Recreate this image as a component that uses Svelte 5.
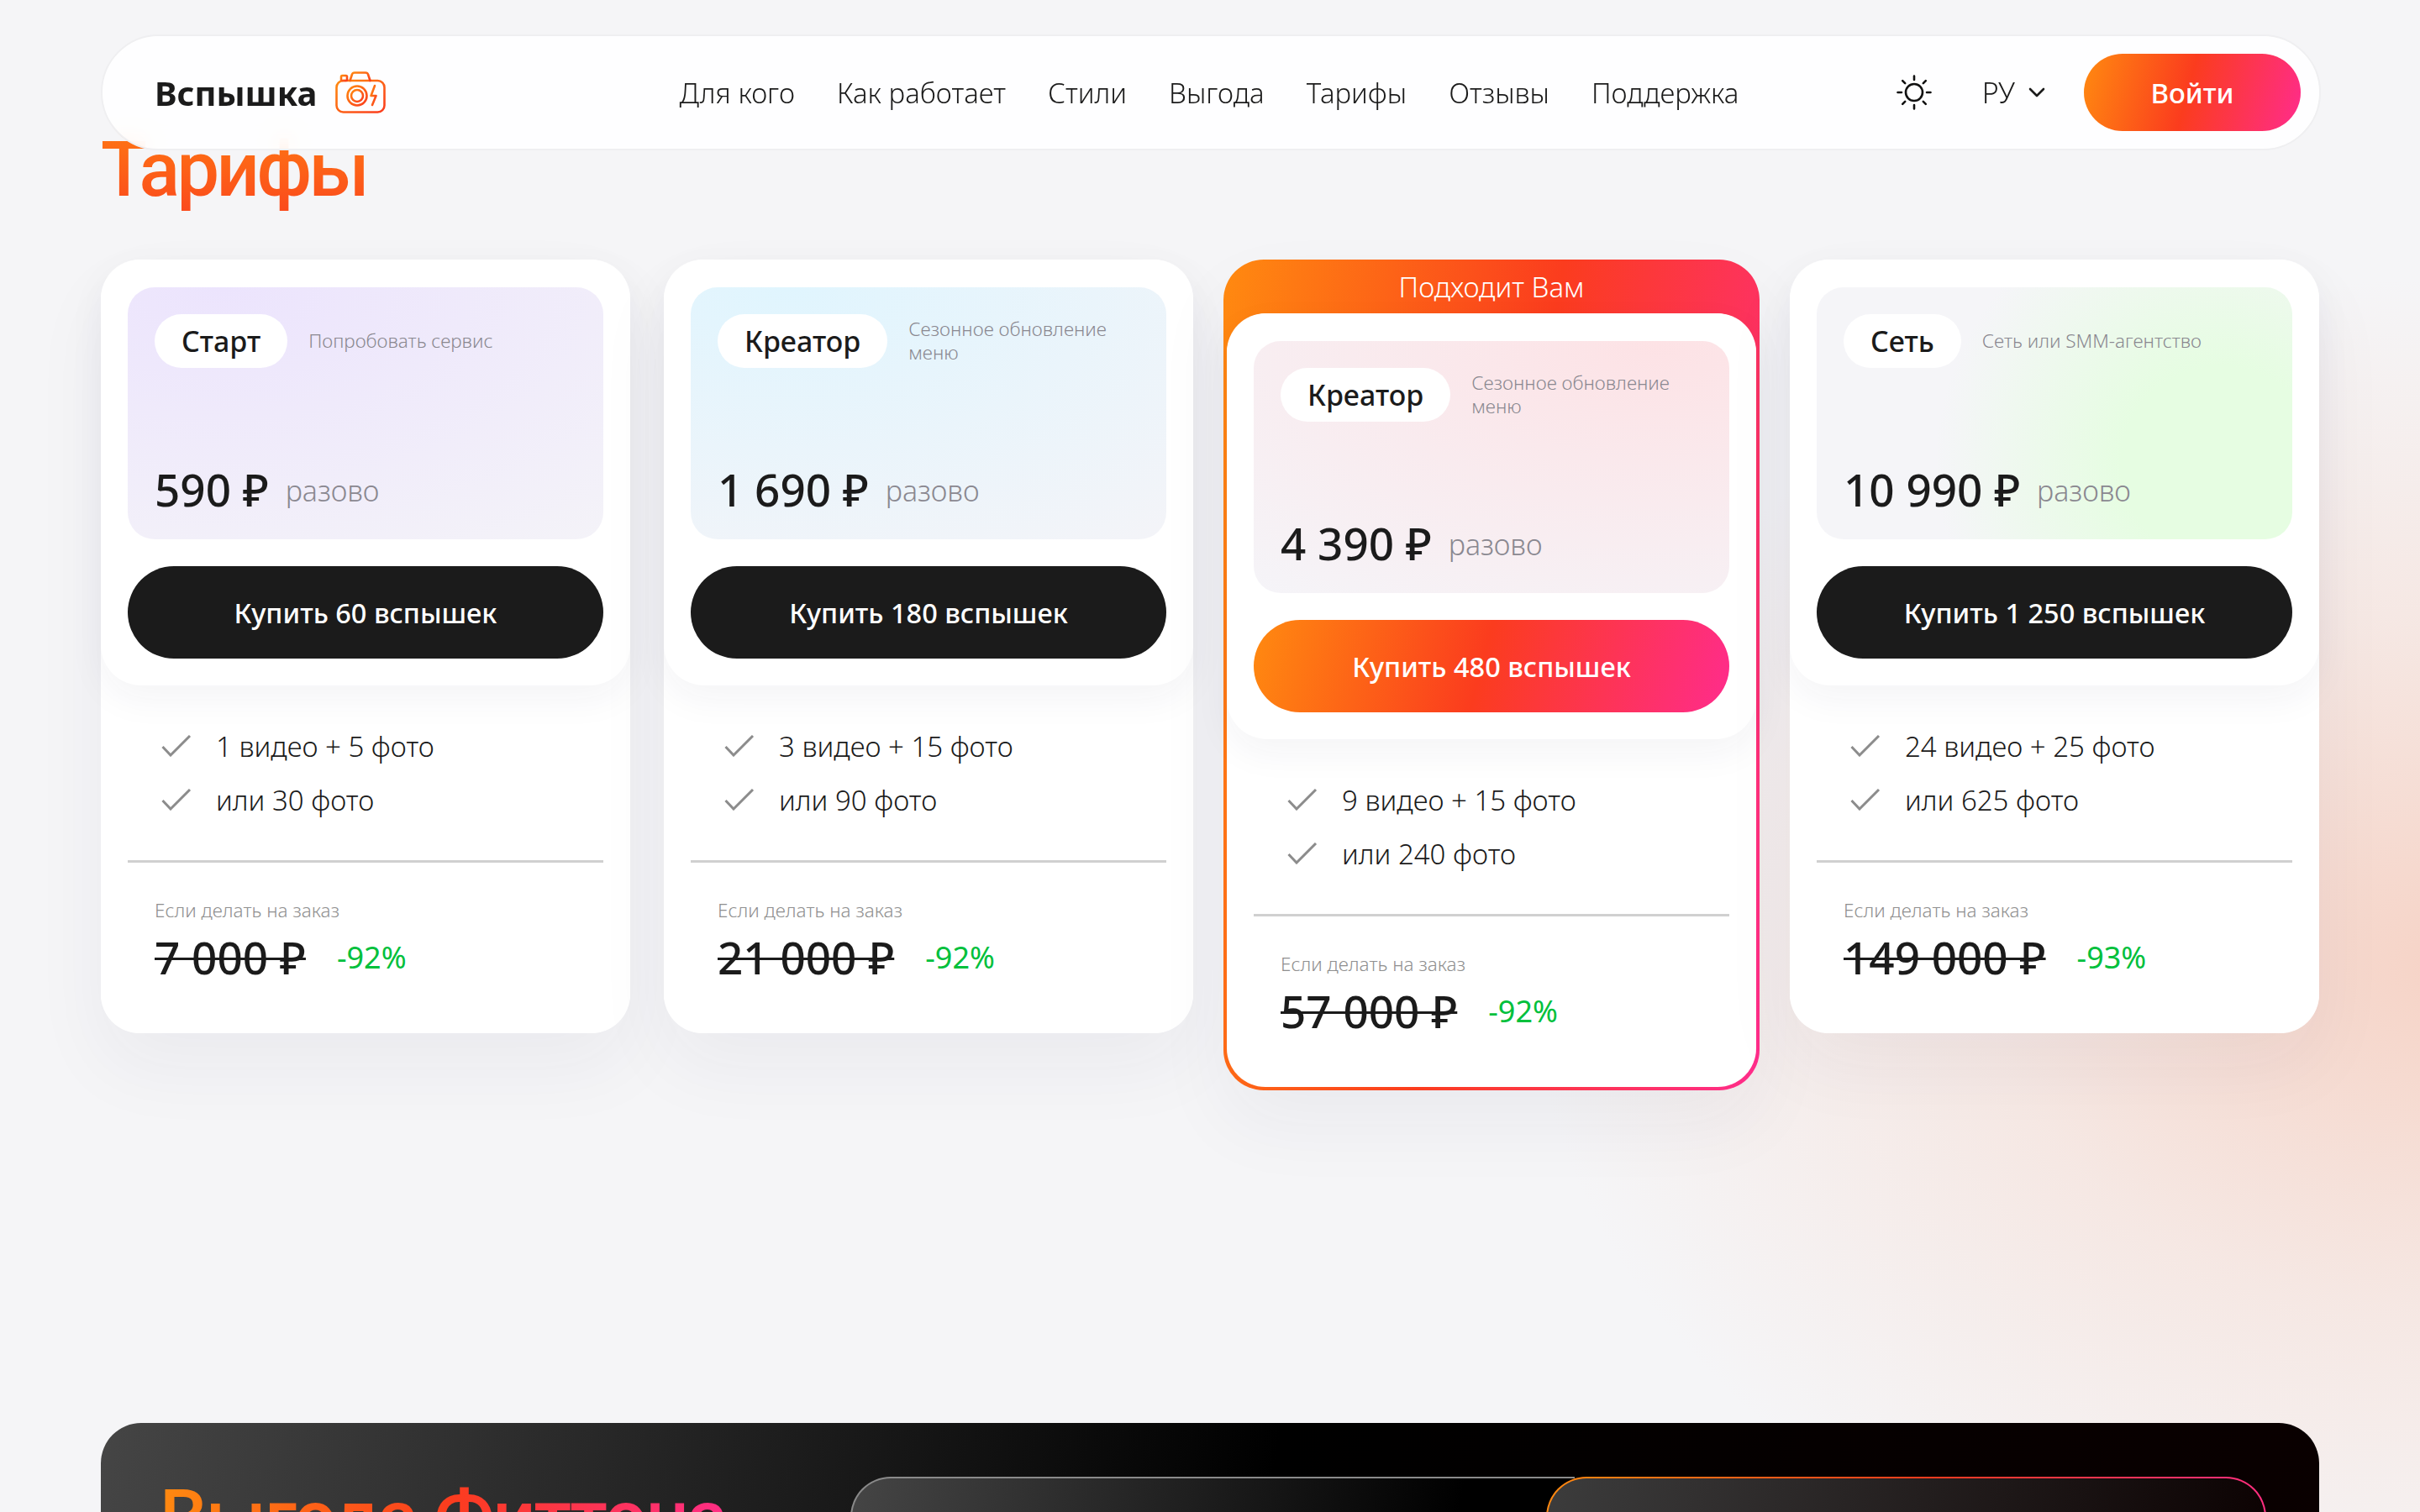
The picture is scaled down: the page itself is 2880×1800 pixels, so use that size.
<script>
  const gain = [
    { name: 'Старт', note: 'Попробовать сервис', price: '590 ₽', buy: 'Купить 60 вспышек', items: ['1 видео + 5 фото', 'или 30 фото'], old: '7 000 ₽', off: '-92%', tone: 'violet' },
    { name: 'Креатор', note: 'Сезонное обновление меню', price: '1 690 ₽', buy: 'Купить 180 вспышек', items: ['3 видео + 15 фото', 'или 90 фото'], old: '21 000 ₽', off: '-92%', tone: 'blue' },
    { name: 'Креатор', note: 'Сезонное обновление меню', price: '4 390 ₽', buy: 'Купить 480 вспышек', items: ['9 видео + 15 фото', 'или 240 фото'], old: '57 000 ₽', off: '-92%', tone: 'rose', featured: true },
    { name: 'Сеть', note: 'Сеть или SMM-агентство', price: '10 990 ₽', buy: 'Купить 1 250 вспышек', items: ['24 видео + 25 фото', 'или 625 фото'], old: '149 000 ₽', off: '-93%', tone: 'green' }
  ];
  const nav = ['Для кого', 'Как работает', 'Стили', 'Выгода', 'Тарифы', 'Отзывы', 'Поддержка'];
</script>

<div class="page">
  <header class="top">
    <a class="logo" href="#top">
      <span>Вспышка</span>
      <svg width="60" height="50" viewBox="0 0 60 50" fill="none" stroke="url(#cam)" stroke-width="2.6" stroke-linejoin="round" stroke-linecap="round">
        <defs>
          <linearGradient id="cam" x1="0" y1="0" x2="1" y2="1">
            <stop offset="0" stop-color="#ff8a10" />
            <stop offset="1" stop-color="#fb3c1e" />
          </linearGradient>
        </defs>
        <rect x="1.5" y="11" width="57" height="37.5" rx="8" />
        <path d="M17.5 11 20 3.5Q20.6 1.5 23 1.5H36Q38.4 1.5 39 3.5L41.5 11" />
        <rect x="7" y="5" width="7" height="6" rx="1.2" />
        <circle cx="26" cy="29" r="11.5" />
        <circle cx="26" cy="29" r="7" />
        <path d="M47 17 42.5 29H48.5L44 40" />
      </svg>
    </a>
    <nav>
      {#each nav as item}
        <a href="#top">{item}</a>
      {/each}
    </nav>
    <div class="tools">
      <svg class="sun" width="42" height="42" viewBox="0 0 42 42" fill="none" stroke="#111" stroke-width="2.6" stroke-linecap="round">
        <circle cx="21" cy="21" r="10" />
        <path d="M21 1.5V6M21 36V40.5M1.5 21H6M36 21H40.5M7.2 7.2 10.2 10.2M31.8 31.8 34.8 34.8M7.2 34.8 10.2 31.8M31.8 10.2 34.8 7.2" />
      </svg>
      <button class="lang" type="button">
        РУ
        <svg width="20" height="12" viewBox="0 0 20 12" fill="none" stroke="#1b1b1b" stroke-width="2.6" stroke-linecap="round" stroke-linejoin="round"><path d="M2 2 10 10 18 2" /></svg>
      </button>
      <button class="login" type="button">Войти</button>
    </div>
  </header>

  <main>
    <h1>Тарифы</h1>
    <section class="plans">
      {#each gain as plan}
        <article class="plan" class:featured={plan.featured}>
          {#if plan.featured}
            <div class="ribbon">Подходит Вам</div>
          {/if}
          <div class="body">
            <div class="head">
              <div class="panel {plan.tone}">
                <div class="panel-top">
                  <span class="pill">{plan.name}</span>
                  <span class="note">{plan.note}</span>
                </div>
                <p class="price">{plan.price} <small>разово</small></p>
              </div>
              <button class="buy" type="button">{plan.buy}</button>
            </div>
            <ul>
              {#each plan.items as item}
                <li>
                  <svg width="36" height="26" viewBox="0 0 36 26" fill="none" stroke="#8c8c8c" stroke-width="3"><path d="M1.5 14 11 24 34 1" /></svg>
                  {item}
                </li>
              {/each}
            </ul>
            <div class="custom">
              <p>Если делать на заказ</p>
              <div class="old-row">
                <s>{plan.old}</s>
                <span>{plan.off}</span>
              </div>
            </div>
          </div>
        </article>
      {/each}
    </section>

    <section class="dark">
      <h2>Выгода Фиттона</h2>
      <div class="compare">
        <div class="cmp plain"></div>
        <div class="cmp hot"></div>
      </div>
    </section>
  </main>
</div>

<style>
  :global(body) {
    margin: 0;
    background: #f5f5f7;
  }

  .page {
    position: relative;
    height: 1800px;
    overflow: hidden;
    font-family: "Noto Sans", "Open Sans", sans-serif;
    color: #1b1b1b;
    background:
      radial-gradient(1100px 820px at 2920px 1150px, #f6d3c6 0%, rgba(246, 213, 200, 0.42) 50%, rgba(246, 213, 200, 0) 100%),
      #f5f5f7;
  }

  .top {
    position: absolute;
    top: 41px;
    left: 120px;
    z-index: 5;
    box-sizing: border-box;
    width: 2642px;
    height: 138px;
    display: flex;
    align-items: center;
    padding: 0 22px 0 62px;
    border: 2px solid #efeff1;
    border-radius: 69px;
    background: rgba(255, 255, 255, 0.9);
    backdrop-filter: blur(12px);
  }

  .logo {
    display: flex;
    align-items: center;
    gap: 22px;
    color: #1b1b1b;
    text-decoration: none;
    font-size: 40px;
    font-weight: 700;
  }

  nav {
    display: flex;
    gap: 50px;
    margin-left: 349px;
  }

  nav a {
    color: #1b1b1b;
    text-decoration: none;
    font-size: 33px;
    font-weight: 300;
  }

  .tools {
    display: flex;
    align-items: center;
    margin-left: auto;
  }

  .lang {
    display: flex;
    align-items: center;
    gap: 16px;
    margin: 0 46px 0 60px;
    padding: 0;
    border: 0;
    background: none;
    color: #1b1b1b;
    font: 300 34px "Noto Sans", sans-serif;
  }

  .login {
    width: 258px;
    height: 92px;
    border: 0;
    border-radius: 46px;
    background: linear-gradient(105deg, #ff8a10 0%, #fb3c1e 48%, #ff2c8c 100%);
    color: #fff;
    font: 500 33px "Noto Sans", sans-serif;
  }

  main {
    padding: 0 120px;
  }

  h1 {
    box-sizing: border-box;
    margin: 0;
    padding-top: 153px;
    height: 309px;
    font-family: Roboto, sans-serif;
    font-size: 90px;
    line-height: 100px;
    font-weight: 500;
    letter-spacing: -3.5px;
    background: linear-gradient(180deg, #ff7d12 45%, #fb4c1c 80%);
    background-clip: text;
    -webkit-background-clip: text;
    color: transparent;
    width: max-content;
  }

  .plans {
    display: grid;
    grid-template-columns: repeat(4, 630px);
    gap: 40px;
    align-items: start;
  }

  .plan {
    border-radius: 48px;
    background: #fff;
    box-shadow: 0 40px 90px rgba(40, 40, 70, 0.05);
  }

  .featured {
    margin: 0 -4px;
    padding: 0 4px 4px;
    background: linear-gradient(100deg, #ff8a10 0%, #fb3c1e 50%, #ff2c8c 100%);
  }

  .ribbon {
    height: 64px;
    display: flex;
    align-items: center;
    justify-content: center;
    color: #fff;
    font-size: 33px;
    font-weight: 300;
  }

  .body {
    border-radius: 46px;
    background: #fff;
  }

  .head {
    box-sizing: border-box;
    height: 507px;
    padding: 33px 32px 32px;
    border-radius: 48px;
    background: #fff;
    box-shadow: 0 16px 44px rgba(40, 40, 70, 0.05);
  }

  .panel {
    box-sizing: border-box;
    height: 300px;
    display: flex;
    flex-direction: column;
    justify-content: space-between;
    padding: 32px 32px 28px;
    border-radius: 32px;
  }

  .violet { background: radial-gradient(130% 130% at 20% 0%, #ece4fd 0%, #f4f3f8 100%); }
  .blue { background: radial-gradient(130% 130% at 20% 0%, #e0f5fe 0%, #f4f4f8 100%); }
  .rose { background: radial-gradient(130% 130% at 85% 0%, #fde2e5 0%, #f5f4f8 100%); }
  .green { background: radial-gradient(60% 110% at 85% 70%, #e6fde2 35%, #f5f5f8 100%); }

  .panel-top {
    display: flex;
    align-items: flex-start;
    gap: 25px;
  }

  .pill {
    flex: none;
    height: 64px;
    padding: 0 32px;
    display: flex;
    align-items: center;
    border-radius: 32px;
    background: #fff;
    font-size: 34px;
    font-weight: 500;
  }

  .note {
    padding-top: 2px;
    min-height: 60px;
    display: flex;
    align-items: center;
    max-width: 280px;
    color: #8a8890;
    font-size: 22.5px;
    line-height: 28px;
    font-weight: 300;
  }

  .price {
    margin: 0;
    font-size: 53px;
    line-height: 60px;
    font-weight: 500;
  }

  .price small {
    margin-left: 6px;
    color: #8a8890;
    font-size: 34px;
    font-weight: 300;
    vertical-align: 6px;
  }

  .buy {
    width: 100%;
    height: 110px;
    margin-top: 32px;
    border: 0;
    border-radius: 55px;
    background: #1b1b1b;
    color: #fff;
    font: 500 32.5px "Noto Sans", sans-serif;
  }

  .featured .buy {
    background: linear-gradient(105deg, #ff8a10 0%, #fb3c1e 48%, #ff2c8c 100%);
  }

  ul {
    margin: 0 32px;
    padding: 40px 0 0;
    height: 168px;
    box-sizing: content-box;
    list-style: none;
    border-bottom: 3px solid #d0d0d0;
  }

  li {
    display: flex;
    align-items: center;
    gap: 29px;
    height: 64px;
    padding-left: 40px;
    font-size: 33px;
    font-weight: 300;
  }

  .custom {
    height: 203px;
    box-sizing: border-box;
    padding: 41px 64px 0;
  }

  .custom p {
    margin: 0;
    color: #8f8f8f;
    font-size: 22.5px;
    font-weight: 300;
  }

  .old-row {
    display: flex;
    align-items: center;
    gap: 37px;
    margin-top: 4px;
  }

  .old-row s {
    font-size: 53px;
    font-weight: 500;
    text-decoration-thickness: 3px;
    color: #1b1b1b;
  }

  .old-row span {
    color: #00c03c;
    font-size: 36px;
  }

  .dark {
    height: 300px;
    margin-top: 396px;
    display: grid;
    grid-template-columns: 822px 1fr;
    padding: 64px 0 0 70px;
    border-radius: 48px;
    background: linear-gradient(100deg, #454545 0%, #000 52%, #0a0000 100%);
  }

  h2 {
    margin: 0;
    font-family: Roboto, sans-serif;
    font-size: 90px;
    line-height: 100px;
    font-weight: 500;
    letter-spacing: -2px;
    white-space: nowrap;
    width: max-content;
    background: linear-gradient(95deg, #ff8a10 0%, #fb3c1e 50%, #ff2c8c 100%);
    background-clip: text;
    -webkit-background-clip: text;
    color: transparent;
  }

  .compare {
    display: flex;
    height: 300px;
  }

  .cmp {
    box-sizing: border-box;
    height: 300px;
  }

  .plain {
    width: 862px;
    border-top: 2px solid #8a8a8a;
    border-left: 2px solid #8a8a8a;
    border-radius: 48px 0 0 0;
    background: linear-gradient(100deg, #454545 0%, #000 80%);
  }

  .hot {
    width: 857px;
    margin-left: -34px;
    border: 2px solid transparent;
    border-bottom: 0;
    border-radius: 48px 48px 0 0;
    background:
      linear-gradient(100deg, #3c3c3c 0%, #0a0000 100%) padding-box,
      linear-gradient(100deg, #ff8a10 0%, #fb3c1e 50%, #ff2c8c 100%) border-box;
  }
</style>
